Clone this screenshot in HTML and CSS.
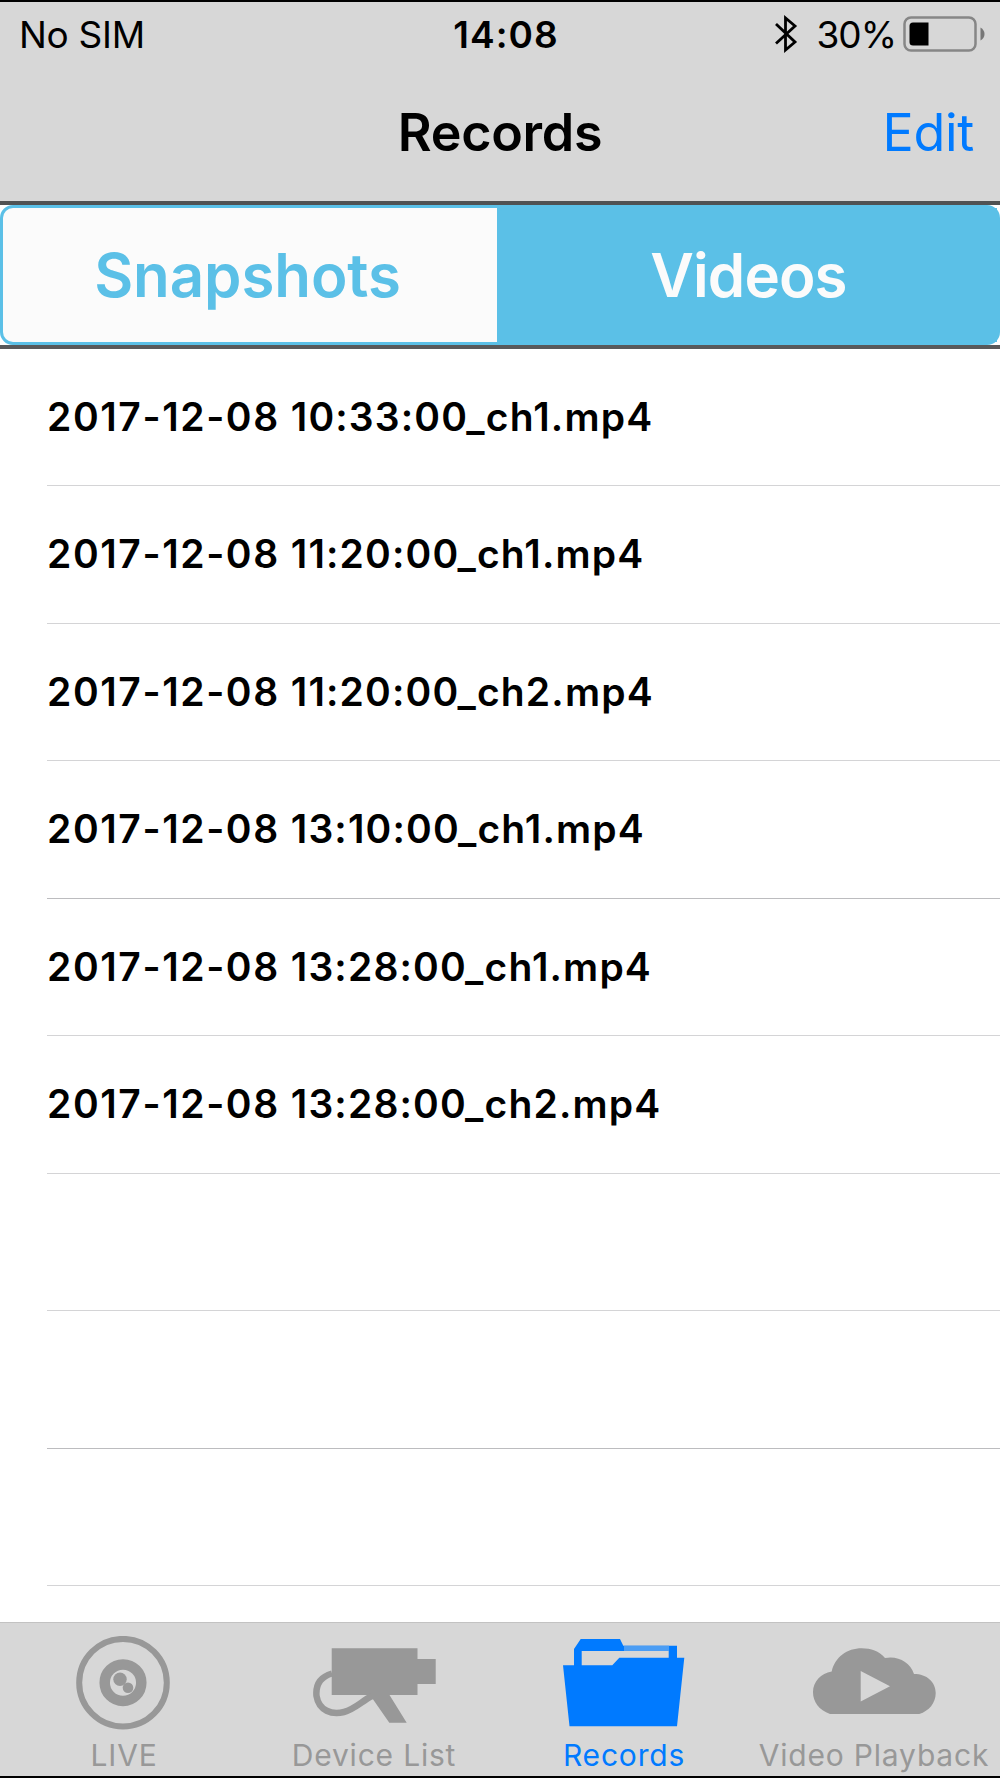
FILE: index.html
```
<!DOCTYPE html>
<html lang="en">
<head>
  <meta charset="UTF-8" />
  <meta name="viewport" content="width=device-width, initial-scale=1.0" />
  <title>Records</title>
  <link rel="stylesheet" href="styles.css">
</head>
<body>
  <div class="app">
    <header class="top">
      <div class="status-bar">
        <span class="carrier">No SIM</span>
        <span class="time">14:08</span>
        <div class="status-right">
          <svg class="bluetooth" width="24" height="38" viewBox="0 0 24 38">
            <path d="M2 9 L21 27 L11.5 35 V3 L21 11 L2 28.500" fill="none" stroke="#000" stroke-width="2.800" />
          </svg>
          <span class="percent">30%</span>
          <svg class="battery" width="82" height="36" viewBox="0 0 82 36">
            <rect x="1.500" y="1.500" width="71" height="33" rx="6.500" fill="none" stroke="#868686" stroke-width="2.500" />
            <path d="M10 6.500 H25.500 V29.500 H10 Q6.500 29.500 6.500 26 V10 Q6.500 6.500 10 6.500Z" />
            <path d="M77.500 11.500 Q81.500 14 81.500 18 T77.500 24.500Z" fill="#777" />
          </svg>
        </div>
      </div>
      <div class="nav-bar">
        <h1>Records</h1>
        <a class="edit">Edit</a>
      </div>
    </header>

    <div class="segments">
      <div class="segment">Snapshots</div>
      <div class="segment active">Videos</div>
    </div>

    <ul class="file-list">
      <li><span class="date">2017-12-08</span> 10:33:00_ch1.mp4</li>
      <li><span class="date">2017-12-08</span> 11:20:00_ch1.mp4</li>
      <li><span class="date">2017-12-08</span> 11:20:00_ch2.mp4</li>
      <li class="dark"><span class="date">2017-12-08</span> 13:10:00_ch1.mp4</li>
      <li><span class="date">2017-12-08</span> 13:28:00_ch1.mp4</li>
      <li><span class="date">2017-12-08</span> 13:28:00_ch2.mp4</li>
      <li></li>
      <li class="dark"></li>
      <li></li>
    </ul>

    <nav class="tab-bar">
      <a class="tab">
        <svg viewBox="0 0 124 94">
          <circle cx="61" cy="46.700" r="43.800" fill="none" stroke="currentColor" stroke-width="6" />
          <circle cx="61" cy="46.700" r="18.300" fill="none" stroke="currentColor" stroke-width="10.500" />
          <circle cx="58" cy="43.300" r="6.700" fill="currentColor" />
          <circle cx="66" cy="51.700" r="5.300" fill="currentColor" />
        </svg>
        <span>LIVE</span>
      </a>
      <a class="tab">
        <svg viewBox="0 0 124 94">
          <path d="M19.700 12.300 H105.500 V23 H123.700 V48 H105.500 V59 H77.500 L94.700 86.700 H77.300 L58 59 H19.700Z" fill="currentColor" />
          <path d="M20 37.500 C8 41 3.500 49 4.500 60 C7 75 20 79 32 76 C43 73 50 65 60 60" fill="none" stroke="currentColor" stroke-width="6.500" />
        </svg>
        <span>Device List</span>
      </a>
      <a class="tab active">
        <svg viewBox="0 0 124 94">
          <path d="M12 30 V13 L18.700 3 H58 L61.300 9.700 H115 V22 H106.700 V15 H19.700 V30Z" fill="currentColor" />
          <path d="M62 9.700 H107 V15 H62Z" fill="#4b9df4" />
          <path d="M1 29.300 H50.300 L57.300 21.700 H122.300 L115 90.300 H7.500Z" fill="currentColor" />
        </svg>
        <span>Records</span>
      </a>
      <a class="tab">
        <svg viewBox="0 0 124 94">
          <path fill-rule="evenodd" d="M18 78 C7 74 1 66 1 56 C1 46 9 37 19.700 35.500 C23 21 35 12.300 49.700 12.300 C59 12.300 67 15 73 22 C86 19.500 98 26 102 38 C115 38 123.700 46 123.700 57 C123.700 67 117 75 107.300 78Z M48.700 35 V65.500 L78 50.300Z" fill="currentColor" />
        </svg>
        <span>Video Playback</span>
      </a>
    </nav>
  </div>
</body>
</html>
```
FILE: styles.css
```
* { box-sizing: border-box; }
body { margin: 0; background: #fff; font-family: Inter, "Liberation Sans", sans-serif; color: #000; }
.app {
  width: 1000px; height: 1778px; display: flex; flex-direction: column;
  border-top: 2px solid #000; border-bottom: 2px solid #000;
}

.top { height: 203px; flex: none; background: #d7d7d7; border-bottom: 4px solid #505253; }
.status-bar {
  height: 64px; padding: 0 15px 0 19px; display: grid;
  grid-template-columns: 1fr auto 1fr; align-items: center; font-size: 37px;
}
.carrier { letter-spacing: -0.3px; }
.time { font-weight: 600; letter-spacing: 1.1px; padding-left: 8px; }
.status-right { display: flex; align-items: center; justify-content: flex-end; }
.bluetooth { margin-right: 18px; }
.percent { letter-spacing: -1px; }
.battery { margin-left: 7px; }
.nav-bar {
  height: 133px; padding: 0 26px; display: grid;
  grid-template-columns: 1fr auto 1fr; align-items: center; font-size: 52px;
}
h1 { grid-column: 2; margin: 0; font-size: 52px; font-weight: 600; letter-spacing: -0.3px; }
.edit { justify-self: end; color: #007aff; letter-spacing: -0.3px; }

.segments {
  height: 140px; flex: none; display: flex; border: 3px solid #5bc0e7;
  border-radius: 13px; background: #5bc0e7;
}
.segment {
  width: 494px; padding: 0 5px 0 0; display: flex; align-items: center; justify-content: center;
  font-size: 60px; font-weight: 600; color: #5bc0e7; background: #fbfbfb;
  border-radius: 10px 0 0 10px; letter-spacing: -0.1px;
}
.segment.active {
  flex: 1; padding: 0 0 0 3px; color: #fbfbfb; background: #5bc0e7; letter-spacing: -0.9px;
}

.file-list {
  flex: 1; margin: 0; padding: 0 0 0 47px; list-style: none;
  overflow: hidden; border-top: 4px solid #58595b;
}
.file-list li {
  height: 137.450px; line-height: 136px; white-space: nowrap;
  border-bottom: 1px solid #d4d4d6; font-size: 39px; font-weight: 600; letter-spacing: 1.15px;
}
.file-list li.dark { border-bottom-color: #bcbcbf; }
.date { letter-spacing: 1.6px; }

.tab-bar {
  height: 154px; flex: none; display: grid; grid-template-columns: repeat(4, 1fr);
  background: #d7d7d7; border-top: 1px solid #c2c2c2;
}
.tab {
  display: flex; flex-direction: column; align-items: center; padding: 13px 2px 0 0;
  color: #989898; font-size: 30px; line-height: 36px; letter-spacing: 0.8px; white-space: nowrap;
}
.tab svg { width: 124px; height: 94px; margin-bottom: 7px; }
.tab.active { color: #007aff; }
```
